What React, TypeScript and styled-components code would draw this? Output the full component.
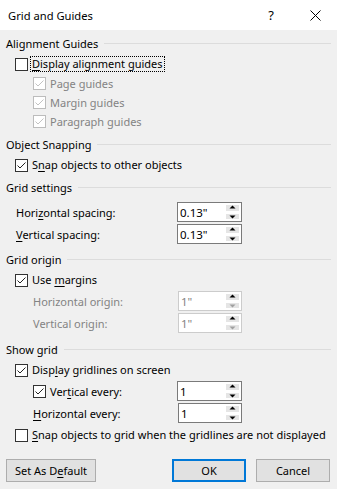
import React from 'react';
import styled, { createGlobalStyle } from 'styled-components';

const GlobalStyle = createGlobalStyle`
    html, body {
        margin: 0;
        padding: 0;
        background: #f0f0f0;
    }
    body {
        font-family: 'Noto Sans', 'Liberation Sans', sans-serif;
        font-size: 11px;
        color: #000;
    }
`;

const Dialog = styled.div`
    width: 337px;
    height: 489px;
    background: #f0f0f0;
    display: flex;
    flex-direction: column;
    overflow: hidden;
`;

const TitleBar = styled.div`
    height: 30px;
    background: #fff;
    display: flex;
    align-items: center;
    padding-left: 8px;
    flex-shrink: 0;
`;

const Title = styled.div`
    flex: 1;
    font-size: 11.2px;
`;

const TitleButton = styled.div`
    width: 44px;
    height: 30px;
    display: flex;
    align-items: center;
    justify-content: center;
    font-size: 13px;
`;

const Body = styled.div`
    padding: 4px 6px 0 0;
    display: flex;
    flex-direction: column;
`;

const Heading = styled.div<{ $mt: number }>`
    height: 18px;
    margin-top: ${(p) => p.$mt}px;
    padding-left: 6px;
    display: flex;
    align-items: center;
    gap: 6px;

    &::after {
        content: '';
        flex: 1;
        height: 1px;
        background: #dcdcdc;
    }
`;

const Row = styled.div<{ $h?: number; $mt?: number; $indent?: number }>`
    height: ${(p) => p.$h ?? 20}px;
    margin-top: ${(p) => p.$mt ?? 0}px;
    padding-left: ${(p) => p.$indent ?? 15}px;
    display: flex;
    align-items: center;
    white-space: nowrap;
`;

const Box = styled.div<{ $disabled?: boolean }>`
    width: 13px;
    height: 13px;
    box-sizing: border-box;
    border: 1px solid ${(p) => (p.$disabled ? '#bcbcbc' : '#333')};
    background: #fff;
    margin-right: 4px;
    flex-shrink: 0;
    display: flex;
    align-items: center;
    justify-content: center;
`;

const Label = styled.span<{ $disabled?: boolean; $focus?: boolean }>`
    color: ${(p) => (p.$disabled ? '#838383' : '#000')};
    outline: ${(p) => (p.$focus ? '1px dotted #000' : 'none')};
    outline-offset: 0;
    padding: 0 1px;
    margin-left: -1px;
    line-height: 14px;
`;

const FieldLabel = styled.span<{ $disabled?: boolean; $w?: number }>`
    width: ${(p) => p.$w ?? 145}px;
    color: ${(p) => (p.$disabled ? '#838383' : '#000')};
    flex-shrink: 0;
`;

const Spin = styled.div<{ $disabled?: boolean }>`
    width: 65px;
    height: 20px;
    box-sizing: border-box;
    border: 1px solid ${(p) => (p.$disabled ? '#cccccc' : '#7a7a7a')};
    background: #fff;
    display: flex;
    margin-left: auto;
    margin-right: 89px;
`;

const SpinText = styled.div<{ $disabled?: boolean }>`
    flex: 1;
    padding-left: 2px;
    display: flex;
    align-items: center;
    font-size: 11.5px;
    color: ${(p) => (p.$disabled ? '#838383' : '#000')};
`;

const SpinButtons = styled.div`
    width: 16px;
    display: flex;
    flex-direction: column;
    gap: 1px;
    padding: 1px 1px 1px 0;
    box-sizing: border-box;
`;

const SpinButton = styled.div`
    flex: 1;
    background: #e5e5e5;
    border: 1px solid #fff;
    display: flex;
    align-items: center;
    justify-content: center;
`;

const Footer = styled.div`
    margin-top: 14px;
    display: flex;
    padding: 0 7px 0 6px;
`;

const Button = styled.div<{ $primary?: boolean; $w: number; $ml?: number }>`
    width: ${(p) => p.$w}px;
    height: 23px;
    box-sizing: border-box;
    margin-left: ${(p) => p.$ml ?? 0}px;
    background: #e1e1e1;
    border: ${(p) => (p.$primary ? '2px solid #0078d7' : '1px solid #adadad')};
    display: flex;
    align-items: center;
    justify-content: center;
`;

const U = styled.u`
    text-decoration: underline;
    text-underline-offset: 2px;
`;

const Check = ({ color }: { color: string }) => (
    <svg width="11" height="11" viewBox="0 0 11 11">
        <polyline points="1.5,5.5 4,8 9.5,2.5" fill="none" stroke={color} strokeWidth="1" />
    </svg>
);

const CheckBox = ({ checked, disabled }: { checked?: boolean; disabled?: boolean }) => (
    <Box $disabled={disabled}>{checked && <Check color={disabled ? '#c2c2c2' : '#222'} />}</Box>
);

const Arrow = ({ up, color }: { up?: boolean; color: string }) => (
    <svg width="7" height="5" viewBox="0 0 7 5">
        {up ? (
            <path d="M3.5 0.5 L6.5 3.5 L0.5 3.5 Z" fill={color} />
        ) : (
            <path d="M0.5 1.5 L6.5 1.5 L3.5 4.5 Z" fill={color} />
        )}
    </svg>
);

const Spinner = ({ value, disabled }: { value: string; disabled?: boolean }) => (
    <Spin $disabled={disabled}>
        <SpinText $disabled={disabled}>{value}</SpinText>
        <SpinButtons>
            <SpinButton>
                <Arrow up color="#000" />
            </SpinButton>
            <SpinButton>
                <Arrow color={disabled ? '#a0a0a0' : '#000'} />
            </SpinButton>
        </SpinButtons>
    </Spin>
);

const App = () => {
    return (
        <Dialog>
            <GlobalStyle />
            <TitleBar>
                <Title>Grid and Guides</Title>
                <TitleButton>?</TitleButton>
                <TitleButton>
                    <svg width="11" height="11" viewBox="0 0 11 11">
                        <path d="M0.5 0.5 L10.5 10.5 M10.5 0.5 L0.5 10.5" stroke="#000" strokeWidth="1" />
                    </svg>
                </TitleButton>
            </TitleBar>
            <Body>
                <Heading $mt={0}>Alignment Guides</Heading>
                <Row $mt={2}>
                    <CheckBox />
                    <Label $focus>
                        <U>D</U>isplay alignment guides
                    </Label>
                </Row>
                <Row $h={19} $indent={33}>
                    <CheckBox checked disabled />
                    <Label $disabled>Page guides</Label>
                </Row>
                <Row $h={19} $indent={33}>
                    <CheckBox checked disabled />
                    <Label $disabled>Margin guides</Label>
                </Row>
                <Row $h={19} $indent={33}>
                    <CheckBox checked disabled />
                    <Label $disabled>Paragraph guides</Label>
                </Row>

                <Heading $mt={4}>Object Snapping</Heading>
                <Row $mt={2}>
                    <CheckBox checked />
                    <Label>
                        S<U>n</U>ap objects to other objects
                    </Label>
                </Row>

                <Heading $mt={3}>Grid settings</Heading>
                <Row $h={22} $mt={5} $indent={16}>
                    <FieldLabel>
                        Hori<U>z</U>ontal spacing:
                    </FieldLabel>
                    <Spinner value={'0.13"'} />
                </Row>
                <Row $h={22} $indent={16}>
                    <FieldLabel>
                        <U>V</U>ertical spacing:
                    </FieldLabel>
                    <Spinner value={'0.13"'} />
                </Row>

                <Heading $mt={5}>Grid origin</Heading>
                <Row $mt={2}>
                    <CheckBox checked />
                    <Label>
                        Use <U>m</U>argins
                    </Label>
                </Row>
                <Row $h={22} $indent={33}>
                    <FieldLabel $disabled>Horizontal origin:</FieldLabel>
                    <Spinner value={'1"'} disabled />
                </Row>
                <Row $h={22} $indent={33}>
                    <FieldLabel $disabled>Vertical origin:</FieldLabel>
                    <Spinner value={'1"'} disabled />
                </Row>

                <Heading $mt={6}>Show grid</Heading>
                <Row $mt={2}>
                    <CheckBox checked />
                    <Label>
                        Disp<U>l</U>ay gridlines on screen
                    </Label>
                </Row>
                <Row $h={22} $indent={33}>
                    <CheckBox checked />
                    <FieldLabel $w={111}>
                        Ver<U>t</U>ical every:
                    </FieldLabel>
                    <Spinner value="1" />
                </Row>
                <Row $h={22} $indent={33}>
                    <FieldLabel>
                        <U>H</U>orizontal every:
                    </FieldLabel>
                    <Spinner value="1" />
                </Row>
                <Row $mt={1}>
                    <CheckBox />
                    <Label>
                        <U>S</U>nap objects to grid when the gridlines are not displayed
                    </Label>
                </Row>
            </Body>
            <Footer>
                <Button $w={90}>
                    Set As D<U>e</U>fault
                </Button>
                <Button $w={74} $ml={76} $primary>
                    OK
                </Button>
                <Button $w={74} $ml={10}>
                    Cancel
                </Button>
            </Footer>
        </Dialog>
    );
};

export default App;
